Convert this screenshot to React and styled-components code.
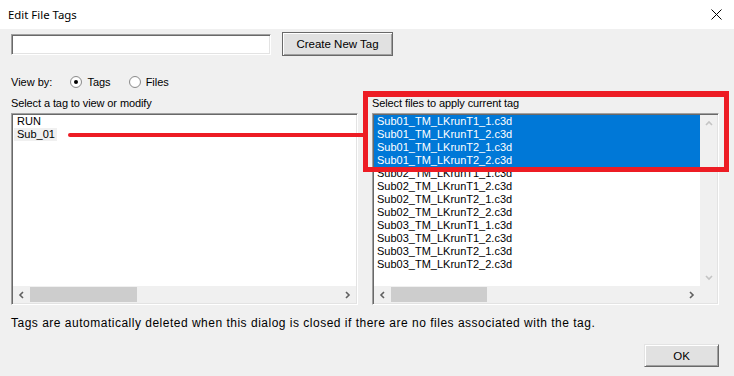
import React from 'react'
import styled, { createGlobalStyle } from 'styled-components'

const Global = createGlobalStyle`
  html, body { margin: 0; padding: 0; background: #f0f0f0; }
  body { font-family: "Liberation Sans", Arial, sans-serif; font-size: 11px; color: #000; }
`

const tags = ['RUN', 'Sub_01']
const files = [
  'Sub01_TM_LKrunT1_1.c3d', 'Sub01_TM_LKrunT1_2.c3d', 'Sub01_TM_LKrunT2_1.c3d', 'Sub01_TM_LKrunT2_2.c3d',
  'Sub02_TM_LKrunT1_1.c3d', 'Sub02_TM_LKrunT1_2.c3d', 'Sub02_TM_LKrunT2_1.c3d', 'Sub02_TM_LKrunT2_2.c3d',
  'Sub03_TM_LKrunT1_1.c3d', 'Sub03_TM_LKrunT1_2.c3d', 'Sub03_TM_LKrunT2_1.c3d', 'Sub03_TM_LKrunT2_2.c3d',
]

const Chevron = ({ dir, color = '#606060' }) => {
  const pts = {
    left: '5,1 2,4 5,7', right: '2,1 5,4 2,7', up: '1,5 4,2 7,5', down: '1,2 4,5 7,2',
  }[dir]
  return (
    <svg width="8" height="8" viewBox="0 0 8 8">
      <polyline points={pts} fill="none" stroke={color} strokeWidth="1.6" />
    </svg>
  )
}

const HScroll = ({ thumbStart, thumbWidth }) => (
  <ScrollBar>
    <ArrowBox><Chevron dir="left" /></ArrowBox>
    <Track>
      <Thumb style={{ left: thumbStart - 17, width: thumbWidth }} />
    </Track>
    <ArrowBox><Chevron dir="right" /></ArrowBox>
  </ScrollBar>
)

const App = () => {
  return (
    <Dialog>
      <Global />
      <TitleBar>
        <Title>Edit File Tags</Title>
        <Close>
          <svg width="11" height="11" viewBox="0 0 11 11">
            <path d="M0.5 0.5 L10.5 10.5 M10.5 0.5 L0.5 10.5" stroke="#000" strokeWidth="1" />
          </svg>
        </Close>
      </TitleBar>
      <Body>
        <TopRow>
          <TextInput />
          <Button $w={111} $h={24} $default>Create New Tag</Button>
        </TopRow>
        <ViewRow>
          <span>View by:</span>
          <Radio $checked />
          <RadioLabel>Tags</RadioLabel>
          <Radio />
          <RadioLabel>Files</RadioLabel>
        </ViewRow>
        <Columns>
          <Column>
            <Label>Select a tag to view or modify</Label>
            <ListBox>
              <ListMain>
                <Items>
                  {tags.map((t, i) => (
                    <TagItem key={t} $soft={i === 1}>{t}</TagItem>
                  ))}
                </Items>
              </ListMain>
              <HScrollRow>
                <HScroll thumbStart={17} thumbWidth={107} />
              </HScrollRow>
            </ListBox>
          </Column>
          <Column>
            <Label>Select files to apply current tag</Label>
            <ListBox>
              <ListMain>
                <Items>
                  {files.map((f, i) => (
                    <FileItem key={f} $selected={i < 4}>{f}</FileItem>
                  ))}
                </Items>
                <VScroll>
                  <Chevron dir="up" color="#c4c4c4" />
                  <Chevron dir="down" color="#c4c4c4" />
                </VScroll>
              </ListMain>
              <HScrollRow>
                <HScroll thumbStart={17} thumbWidth={96} />
                <Corner />
              </HScrollRow>
            </ListBox>
          </Column>
        </Columns>
        <Note>Tags are automatically deleted when this dialog is closed if there are no files associated with the tag.</Note>
        <Footer>
          <Button $w={75} $h={23}>OK</Button>
        </Footer>
      </Body>
      <Highlight />
      <Pointer />
    </Dialog>
  )
}

const Dialog = styled.div`
  position: relative;
  width: 734px;
  height: 376px;
  background: #f0f0f0;
  overflow: hidden;
`
const TitleBar = styled.div`
  height: 29px;
  background: #fff;
  display: flex;
  align-items: center;
  justify-content: space-between;
  padding: 0 12px 0 8px;
  box-sizing: border-box;
`
const Title = styled.span`
  font-family: "Noto Sans", "Liberation Sans", sans-serif;
  font-size: 11.4px;
  margin-top: -1px;
`
const Close = styled.span`
  display: flex;
  margin-top: -1px;
`
const Body = styled.div`
  padding: 3px 15px 0 11px;
  display: flex;
  flex-direction: column;
`
const TopRow = styled.div`
  display: flex;
  align-items: center;
  gap: 11px;
  height: 24px;
`
const TextInput = styled.div`
  width: 260px;
  height: 21px;
  box-sizing: border-box;
  background: #fff;
  border-top: 1px solid #a0a0a0;
  border-left: 1px solid #a0a0a0;
  border-right: 1px solid #fff;
  border-bottom: 1px solid #fff;
  box-shadow: inset 1px 1px 0 #696969, inset -1px -1px 0 #e3e3e3;
`
const Button = styled.div`
  width: ${p => p.$w}px;
  height: ${p => p.$h}px;
  box-sizing: border-box;
  display: flex;
  align-items: center;
  justify-content: center;
  background: #e1e1e1;
  border: 1px solid ${p => (p.$default ? '#696969' : '#e3e3e3')};
  ${p => (p.$default ? '' : 'border-right-color: #696969; border-bottom-color: #696969;')}
  box-shadow: inset 1px 1px 0 #fff, inset -1px -1px 0 #a0a0a0;
  font-size: 11.5px;
`
const ViewRow = styled.div`
  display: flex;
  align-items: center;
  height: 14px;
  margin-top: 19px;
`
const Radio = styled.span`
  width: 12px;
  height: 12px;
  box-sizing: border-box;
  border-radius: 50%;
  border: 1px solid #8c8c8c;
  background: radial-gradient(circle, #fff 55%, #e6e6e6 100%);
  margin-left: 18px;
  position: relative;
  &::after {
    content: "";
    display: ${p => (p.$checked ? 'block' : 'none')};
    position: absolute;
    left: 3px;
    top: 3px;
    width: 4px;
    height: 4px;
    border-radius: 50%;
    background: #000;
  }
`
const RadioLabel = styled.span`
  margin-left: 5px;
`
const Columns = styled.div`
  display: flex;
  gap: 14px;
  margin-top: 7px;
`
const Column = styled.div`
  width: 347px;
  display: flex;
  flex-direction: column;
`
const Label = styled.div`
  line-height: 14px;
  height: 14px;
  margin-bottom: 3px;
  letter-spacing: -0.1px;
`
const ListBox = styled.div`
  height: 192px;
  box-sizing: border-box;
  background: #fff;
  border-top: 1px solid #a0a0a0;
  border-left: 1px solid #a0a0a0;
  border-right: 1px solid #fff;
  border-bottom: 1px solid #fff;
  box-shadow: inset 1px 1px 0 #696969, inset -1px -1px 0 #e3e3e3;
  padding: 1px;
  display: flex;
  flex-direction: column;
`
const ListMain = styled.div`
  flex: 1;
  display: flex;
  min-height: 0;
`
const Items = styled.div`
  flex: 1;
  display: flex;
  flex-direction: column;
  align-items: flex-start;
`
const TagItem = styled.div`
  line-height: 13px;
  padding: 0 2px 0 3px;
  background: ${p => (p.$soft ? '#f0f0f0' : 'transparent')};
  margin-left: 1px;
`
const FileItem = styled.div`
  align-self: stretch;
  line-height: 13px;
  padding-left: 3px;
  background: ${p => (p.$selected ? '#0078d7' : 'transparent')};
  color: ${p => (p.$selected ? '#fff' : '#000')};
`
const VScroll = styled.div`
  width: 17px;
  background: #f0f0f0;
  display: flex;
  flex-direction: column;
  justify-content: space-between;
  align-items: center;
  padding: 5px 0 4px;
  box-sizing: border-box;
`
const HScrollRow = styled.div`
  display: flex;
  height: 17px;
`
const ScrollBar = styled.div`
  flex: 1;
  height: 17px;
  background: #f0f0f0;
  display: flex;
`
const ArrowBox = styled.div`
  width: 17px;
  display: flex;
  align-items: center;
  justify-content: center;
`
const Track = styled.div`
  flex: 1;
  position: relative;
`
const Thumb = styled.div`
  position: absolute;
  top: 1px;
  bottom: 1px;
  background: #cdcdcd;
`
const Corner = styled.div`
  width: 17px;
  height: 17px;
  background: #f0f0f0;
`
const Note = styled.div`
  margin-top: 11px;
  line-height: 14px;
  font-size: 12px;
  letter-spacing: 0.5px;
`
const Footer = styled.div`
  display: flex;
  justify-content: flex-end;
  margin-top: 14px;
`
const Highlight = styled.div`
  position: absolute;
  left: 363px;
  top: 91px;
  width: 366px;
  height: 81px;
  box-sizing: border-box;
  border: 5px solid #ed1c24;
  border-top-width: 6px;
  pointer-events: none;
`
const Pointer = styled.div`
  position: absolute;
  left: 68px;
  top: 133px;
  width: 297px;
  height: 4px;
  border-radius: 2px 0 0 2px;
  background: #ed1c24;
`

export default App
